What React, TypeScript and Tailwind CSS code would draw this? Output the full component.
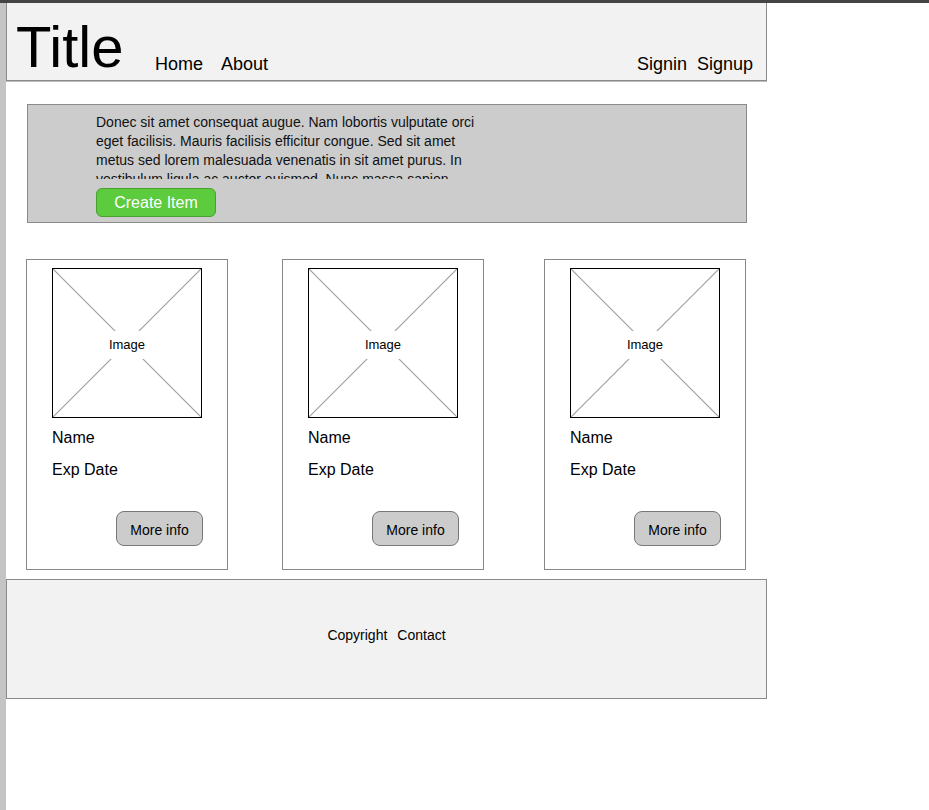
import React from "react";

const font = { fontFamily: '"Liberation Sans", Arial, sans-serif' };

function Card() {
  return (
    <div className="w-[202px] h-[311px] border border-[#888] bg-white flex flex-col">
      <div className="relative ml-[25px] mt-[8px] w-[150px] h-[150px] border border-black bg-white">
        <svg className="absolute inset-0" width="148" height="148" viewBox="0 0 148 148">
          <line x1="0" y1="0" x2="148" y2="148" stroke="#a0a0a0" strokeWidth="1.2" />
          <line x1="148" y1="0" x2="0" y2="148" stroke="#a0a0a0" strokeWidth="1.2" />
        </svg>
        <div className="absolute inset-0 flex items-center justify-center pt-[3px]">
          <span className="bg-white px-[4px] py-[7px] text-[13px] leading-[14px] text-black">Image</span>
        </div>
      </div>
      <div className="ml-[25px] mt-[10px] text-[16px] leading-[20px] text-black">Name</div>
      <div className="ml-[25px] mt-[12px] text-[16px] leading-[20px] text-black">Exp Date</div>
      <div className="flex justify-end mr-[24px] mt-[31px]">
        <button className="w-[87px] h-[35px] rounded-[8px] border border-[#777] bg-[#cccccc] text-[14px] leading-none pt-[2px] text-black">
          More info
        </button>
      </div>
    </div>
  );
}

export default function App() {
  return (
    <div className="w-[929px] h-[810px] bg-white flex flex-col" style={font}>
      <div className="h-[3px] w-full bg-[#444444]" />
      <div className="flex flex-1">
        <div className="w-[6px] bg-[#c4c4c4]" />
        <div className="w-[761px] flex flex-col">
          <header className="h-[78px] border border-t-0 border-[#8a8a8a] bg-[#f2f2f2] flex items-start pl-[9px] pr-[13px] shadow-[0_1px_0_#bdbdbd]">
            <div className="w-[139px] mt-[15px] text-[58px] leading-none text-black">Title</div>
            <nav className="flex gap-[18px] mt-[52px] text-[18px] leading-none text-black">
              <span>Home</span>
              <span>About</span>
            </nav>
            <div className="flex-1" />
            <nav className="flex gap-[10px] mt-[52px] text-[18px] leading-none text-black">
              <span>Signin</span>
              <span>Signup</span>
            </nav>
          </header>

          <section className="ml-[21px] mt-[23px] w-[720px] h-[119px] border border-[#8a8a8a] bg-[#cccccc] pl-[68px] pt-[8px]">
            <div className="w-[392px] h-[66px] overflow-hidden text-[14px] leading-[19px] text-[#111]">
              Donec sit amet consequat augue. Nam lobortis vulputate orci eget facilisis. Mauris facilisis efficitur congue. Sed sit amet metus sed lorem malesuada venenatis in sit amet purus. In vestibulum ligula ac auctor euismod. Nunc massa sapien, ultrices vitae.
            </div>
            <button className="mt-[9px] w-[120px] h-[29px] rounded-[6px] border border-[#4a9f31] bg-[#5ccb3d] text-white text-[16px] leading-none">
              Create Item
            </button>
          </section>

          <div className="flex ml-[20px] mt-[36px]">
            <Card />
            <div className="ml-[54px]">
              <Card />
            </div>
            <div className="ml-[60px]">
              <Card />
            </div>
          </div>

          <footer className="mt-[9px] h-[120px] border border-[#8a8a8a] bg-[#f2f2f2] flex items-center justify-center pb-[8px]">
            <div className="flex gap-[10px] text-[14px] leading-none text-black">
              <span>Copyright</span>
              <span>Contact</span>
            </div>
          </footer>
        </div>
      </div>
    </div>
  );
}
